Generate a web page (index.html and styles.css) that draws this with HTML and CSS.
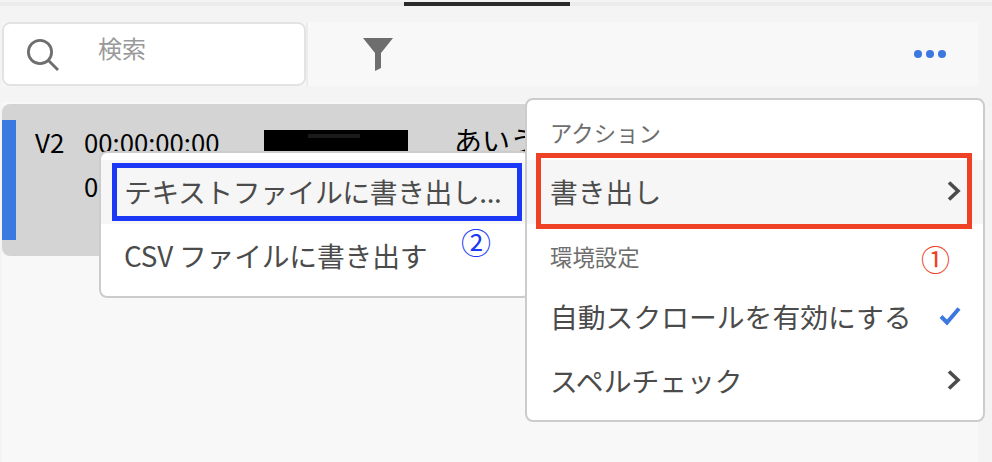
FILE: index.html
```html
<!DOCTYPE html>
<html lang="ja">
<head>
<meta charset="utf-8">
<title>検索</title>
<link rel="stylesheet" href="styles.css">
</head>
<body>
<div class="tabs"><div class="tab-active"></div></div>
<div class="toolbar">
  <div class="search">
    <svg class="search-icon" width="32" height="32" viewBox="0 0 32 32"><circle cx="13" cy="13" r="11.600" fill="none" stroke="#6e6e6e" stroke-width="2.800"/><path d="M21.500 21.500L31 31" stroke="#6e6e6e" stroke-width="2.800"/></svg>
    <span class="search-text">検索</span>
  </div>
  <div class="tools">
    <svg class="filter" width="30" height="33" viewBox="0 0 30 33"><path d="M0 0H30L18 15V30L12 33V15Z" fill="#6e6e6e"/></svg>
    <div class="dots"><i></i><i></i><i></i></div>
  </div>
</div>
<div class="content">
  <div class="row">
    <div class="row-mark"></div>
    <div class="track">V2</div>
    <div class="times"><div>00:00:00:00</div><div>00:00:00:00</div></div>
    <div class="redact"><i></i></div>
    <div class="caption">あいうえお</div>
  </div>
</div>

<div class="menu menu-sub">
  <div class="item hl tight">テキストファイルに書き出し...</div>
  <div class="item tighter">CSV ファイルに書き出す</div>
</div>
<div class="menu menu-main">
  <div class="label">アクション</div>
  <div class="item hl">書き出し<svg class="chev" width="14" height="22" viewBox="0 0 14 22"><path d="M2 2.500L11 11L2 19.500" fill="none" stroke="#4b4b4b" stroke-width="3.600"/></svg></div>
  <div class="label label-second">環境設定</div>
  <div class="item">自動スクロールを有効にする<svg class="check" width="22" height="20" viewBox="0 0 22 20"><path d="M2 10.500L8 16.500L20 2.500" fill="none" stroke="#3b78e0" stroke-width="4"/></svg></div>
  <div class="item">スペルチェック<svg class="chev" width="14" height="22" viewBox="0 0 14 22"><path d="M2 2.500L11 11L2 19.500" fill="none" stroke="#4b4b4b" stroke-width="3.600"/></svg></div>
</div>

<div class="box box-blue"></div>
<div class="box box-red"></div>
<span class="num num-blue">②</span>
<span class="num num-red">①</span>
</body>
</html>
```
FILE: styles.css
```css
* { box-sizing: border-box; }
html, body { margin: 0; padding: 0; }
body {
  width: 992px; height: 462px; overflow: hidden; position: relative;
  background: #f4f4f4;
  font-family: "Noto Sans CJK JP", "Noto Sans", sans-serif;
  color: #4b4b4b;
  padding-top: 2px;
}
.tabs { height: 4px; background: #ececec; margin-bottom: 16px; }
.tab-active { height: 4px; width: 166px; margin-left: 404px; background: #2a2a2a; }
.toolbar { display: flex; height: 64px; margin: 0 14px 0 2px; background: #f8f8f8; }
.search {
  width: 304px; background: #fff; border: 2px solid #e3e3e3; border-radius: 8px;
  display: flex; padding: 0 0 0 23px; align-items: flex-start;
}
.search-icon { margin-top: 15px; }
.search-text { margin: 6px 0 0 39px; font-size: 24px; line-height: 36px; color: #999; }
.tools { flex: 1; display: flex; justify-content: space-between; border-left: 2px solid #ececec; padding: 16px 32px 0 55px; }
.dots { display: flex; gap: 4px; margin-top: 12px; }
.dots i { width: 8px; height: 8px; border-radius: 50%; background: #3b78e0; }
.content { margin: 16px 14px 0 2px; padding-top: 2px; height: 378px; background: #f8f8f8; }
.row {
  display: flex; align-items: flex-start; height: 152px; padding-top: 16px;
  background: #d4d4d4; border-radius: 8px 0 0 8px; color: #000; width: 600px;
}
.row-mark { width: 14px; height: 120px; background: #3b78e0; }
.track { width: 49px; margin-left: 19px; font-size: 26px; line-height: 44px; }
.times { width: 180px; font-size: 25.700px; line-height: 44px; white-space: nowrap; }
.redact { width: 144px; height: 60px; margin-top: 10px; background: #000; display: flex; justify-content: center; padding: 4px 5px 0 0; }
.redact i { display: block; width: 52px; height: 4px; background: #1a1a1a; }
.caption { margin-left: 46px; font-size: 28px; line-height: 40px; white-space: nowrap; }
.menu { position: absolute; background: #fff; border: 2px solid #ccc; border-radius: 8px; }
.menu-sub { left: 99px; top: 151px; width: 432px; height: 147px; padding-top: 7px; }
.menu-main { left: 525px; top: 98px; width: 460px; height: 324px; padding-top: 9px; }
.item { display: flex; justify-content: space-between; align-items: center; height: 64px; padding: 0 23px 2px 23px; font-size: 27.800px; white-space: nowrap; }
.menu-main .item { padding-right: 22px; }
.tight { letter-spacing: -0.4px; }
.tighter { letter-spacing: -0.2px; }
.hl { background: #f6f6f6; }
.label { font-size: 22.400px; line-height: 46px; padding: 0 0 5px 23px; color: #6e6e6e; }
.label-second { margin-top: 9px; padding-bottom: 6px; }
.box { position: absolute; }
.box-blue { left: 112px; top: 163px; width: 410px; height: 58px; border: 5px solid #1a38f5; }
.box-red { left: 536px; top: 153px; width: 436px; height: 76px; border: 5px solid #ee4126; }
.num { position: absolute; font-size: 29px; line-height: 30px; }
.num-blue { left: 461px; top: 226px; font-size: 30px; color: #1a38f5; }
.num-red { left: 921px; top: 243px; color: #ee4126; }
```
